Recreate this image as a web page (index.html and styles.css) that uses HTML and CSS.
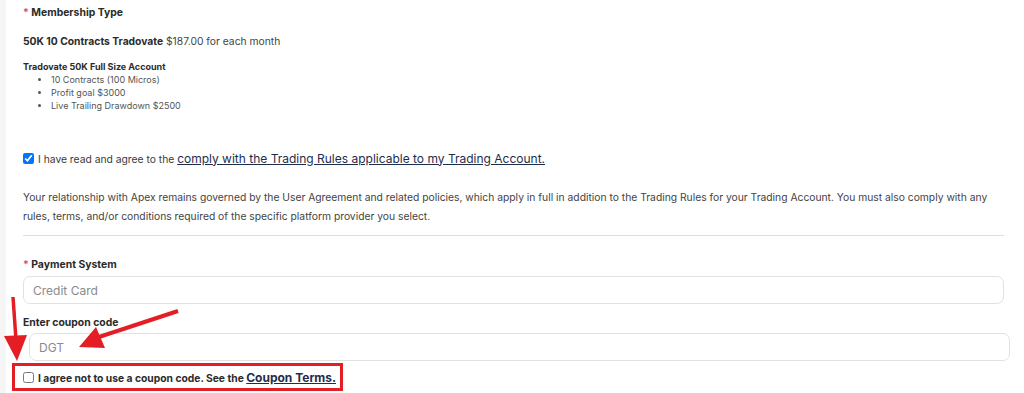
FILE: index.html
```html
<!DOCTYPE html>
<html lang="en">
<head>
    <meta charset="UTF-8">
    <meta name="viewport" content="width=device-width, initial-scale=1.0">
    <title>Checkout</title>
    <link rel="stylesheet" href="styles.css">
</head>
<body>
    <div class="panel">
        <div class="field-label"><span class="req">*</span> Membership Type</div>

        <p class="plan"><b>50K 10 Contracts Tradovate</b> $187.00 for each month</p>

        <div class="plan-details">
            <div class="plan-title">Tradovate 50K Full Size Account</div>
            <ul>
                <li>10 Contracts (100 Micros)</li>
                <li>Profit goal $3000</li>
                <li>Live Trailing Drawdown $2500</li>
            </ul>
        </div>

        <div class="agree-row">
            <input type="checkbox" id="rules" checked>
            <label for="rules">I have read and agree to the <a href="#" class="big-link">comply with the Trading Rules applicable to my Trading Account.</a></label>
        </div>

        <p class="notice">Your relationship with Apex remains governed by the User Agreement and related policies, which apply in full in addition to the Trading Rules for your Trading Account. You must also comply with any rules, terms, and/or conditions required of the specific platform provider you select.</p>

        <hr class="divider">

        <div class="field-label label-pay"><span class="req">*</span> Payment System</div>
        <input type="text" class="text-input" placeholder="Credit Card">

        <div class="field-label label-coupon">Enter coupon code</div>
        <input type="text" class="text-input coupon-input" placeholder="DGT">

        <div class="agree-row coupon-row">
            <input type="checkbox" id="nocoupon">
            <label for="nocoupon">I agree not to use a coupon code. See the <a href="#" class="big-link">Coupon Terms.</a></label>
        </div>
    </div>

    <!-- annotation arrows drawn over the form -->
    <svg class="arrows" width="1024" height="393" viewBox="0 0 1024 393">
        <line x1="13" y1="297" x2="16" y2="340" stroke="#e31e24" stroke-width="3.5"/>
        <polygon points="4,336 27,335 17,361" fill="#e31e24"/>
        <line x1="178" y1="311" x2="99" y2="337" stroke="#e31e24" stroke-width="4"/>
        <polygon points="79,347 96,327 105,348" fill="#e31e24"/>
    </svg>
</body>
</html>
```

FILE: styles.css
```css
body {
    margin: 0;
    background: #f5f5f5;
    font-family: Inter, "Open Sans", sans-serif;
    color: #3a3a3a;
    font-size: 10.3px;
}

.panel {
    margin-left: 6px;
    background: #fff;
    padding: 5px 20px 0 17px;
    min-height: 388px;
}

.field-label {
    font-weight: 700;
    font-size: 10.4px;
    line-height: 16px;
    color: #2b2b2b;
}

.req {
    color: #d9534f;
}

.plan {
    margin: 12px 0 0;
    line-height: 16px;
    color: #444;
}

.plan b {
    color: #2b2b2b;
}

.plan-details {
    margin-top: 11px;
    font-size: 9px;
    line-height: 13px;
}

.plan-title {
    font-weight: 700;
    color: #2b2b2b;
}

.plan-details ul {
    margin: 0;
    padding-left: 28px;
    color: #555;
}

.agree-row {
    display: flex;
    align-items: center;
    margin-top: 36px;
    height: 20px;
    white-space: nowrap;
}

.agree-row input {
    width: 11px;
    height: 11px;
    margin: 0 4px 0 0;
    flex: none;
}

.big-link {
    color: #1f2d4d;
    font-size: 12px;
    text-decoration: underline;
}

.notice {
    margin: 20px 0 0;
    font-size: 10.3px;
    line-height: 19px;
    color: #444;
}

.divider {
    margin: 9px 0 0;
    border: none;
    border-top: 1px solid #dedede;
}

.label-pay {
    margin-top: 21px;
}

.label-coupon {
    margin-top: 11px;
}

.text-input {
    display: block;
    box-sizing: border-box;
    width: 100%;
    height: 28px;
    margin-top: 3px;
    padding: 0 9px;
    border: 1px solid #e2e2e2;
    border-radius: 7px;
    font-family: inherit;
    font-size: 12px;
}

.text-input::placeholder {
    color: #8a8a8a;
}

.coupon-input {
    margin-left: 6px;
    margin-top: 2px;
}

.coupon-row {
    box-sizing: border-box;
    margin: 2px 0 0 -11px;
    width: 331px;
    height: 28px;
    padding-left: 8px;
    border: 3px solid #e31e24;
    font-weight: 700;
    color: #2b2b2b;
}

.coupon-row .big-link {
    font-weight: 700;
}

.arrows {
    position: absolute;
    top: 0;
    left: 0;
    pointer-events: none;
}
```
